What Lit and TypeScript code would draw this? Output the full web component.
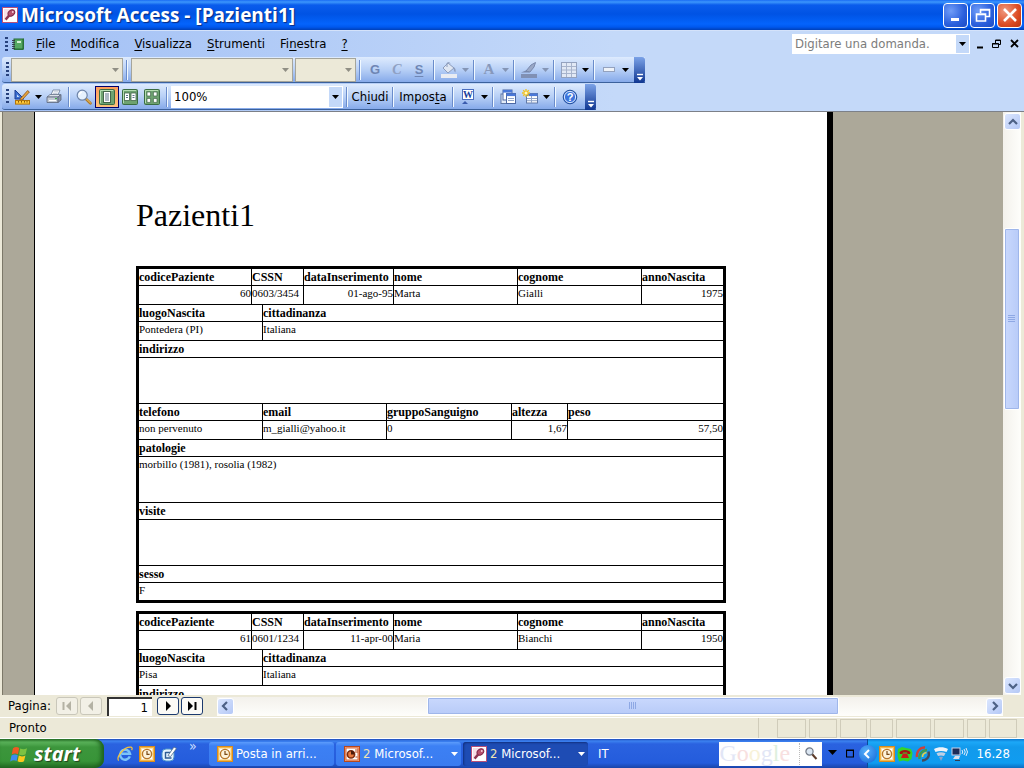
import { LitElement, html, css, svg, nothing, type TemplateResult } from "lit";
import { customElement, property } from "lit/decorators.js";

const icon = (body: unknown, w = 16, h = 16) => html`<svg
  width=${w} height=${h} viewBox="0 0 ${w} ${h}" aria-hidden="true">${body}</svg>`;

const arrow = (fill = "#000") => icon(svg`<path d="M0 0h7L3.5 4z" fill=${fill}/>`, 7, 4);

const clockIcon = icon(svg`
  <rect x=".5" y=".5" width="15" height="15" fill="#f6b84a" stroke="#d98c1c"/>
  <rect x="2.5" y="2.5" width="11" height="11" fill="#fff" stroke="#fbe3ae"/>
  <circle cx="8" cy="8" r="4.6" fill="#fdf3dc" stroke="#b8772a" stroke-width="1.4"/>
  <path d="M8 5v3.4h2.6" fill="none" stroke="#7a4a16" stroke-width="1.2"/>`);

const keyIcon = icon(svg`
  <rect x=".5" y=".5" width="15" height="15" fill="#fff" stroke="#b85078"/>
  <path d="M2 14V2h12z" fill="#f7dfe6"/>
  <ellipse cx="9.4" cy="6" rx="3.6" ry="2.8" transform="rotate(-40 9.4 6)" fill="#b8506c" stroke="#7e2447"/>
  <path d="M7.2 8.4L3.6 12.6" stroke="#8e3450" stroke-width="2.4"/>
  <circle cx="10.8" cy="5" r=".9" fill="#f4d4dc"/>`);

const pptIcon = icon(svg`
  <rect x=".5" y=".5" width="15" height="15" fill="#f0a888" stroke="#b8481c"/>
  <rect x="2" y="2" width="12" height="12" fill="#fff" stroke="#d9683a"/>
  <circle cx="7" cy="8.4" r="3.6" fill="#e87a40" stroke="#7c2c10" stroke-width="1.6"/>
  <path d="M7 8.4V4.8a3.6 3.6 0 0 1 3.4 3.6z" fill="#4a1c0c"/>
  <path d="M11 4h3M11 6h3M11.500 11h2" stroke="#b8481c"/>`);

const bookIcon = icon(svg`
  <path d="M4 3h9l1-1v11l-1 1H4z" fill="#2c7a3c"/>
  <rect x="4" y="3" width="9" height="10" fill="#56a862" stroke="#246a34"/>
  <rect x="7" y="5" width="4" height="2" fill="#d4efd4"/>
  <path d="M2 4.5h3M2 6.5h3M2 8.5h3M2 10.5h3M2 12.5h3" stroke="#334" stroke-width=".9"/>`);

const designIcon = icon(svg`
  <path d="M1 1v9h9z" fill="#3a6fd0" stroke="#1c3f94"/>
  <path d="M3 5.6V8h2.4z" fill="#cfe0fb"/>
  <path d="M6.4 9.6L13.6 1.6l1.8 1.4L8.4 10.6l-2.6.8z" fill="#e9a53c" stroke="#85501a" stroke-width=".8"/>
  <rect x="1.5" y="11.5" width="14" height="3.6" fill="#ffc93a" stroke="#b17408"/>
  <path d="M4.5 12v1.6M7.5 12v1.6M10.5 12v1.6M13 12v1.6" stroke="#8a5a08"/>`, 17, 16);

const printIcon = icon(svg`
  <path d="M5 6L7 1h7l-2 5z" fill="#fff" stroke="#7384a0" stroke-width=".9"/>
  <path d="M7.6 2.8h4.6M7 4.4h4.6" stroke="#a8b4c8" stroke-width=".7"/>
  <path d="M1 8l3-2.5h10.5L12 8z" fill="#dde2e8" stroke="#68748a" stroke-width=".8"/>
  <path d="M1 8h11v5.5H1z" fill="#c3cad4" stroke="#5a667c" stroke-width=".8"/>
  <path d="M12 8l3-2.5V11l-3 2.5z" fill="#8b95a6" stroke="#5a667c" stroke-width=".8"/>
  <path d="M3 11.5h7" stroke="#fff"/><rect x="9" y="9" width="2" height="1.2" fill="#3cae4c"/>`);

const zoomIcon = icon(svg`
  <path d="M10 10l4.4 4.2" stroke="#b07a28" stroke-width="2.8" stroke-linecap="round"/>
  <path d="M10.4 10l4 3.8" stroke="#f4cd70" stroke-width="1" stroke-linecap="round"/>
  <circle cx="6.2" cy="6.2" r="5" fill="#e6f1fd" stroke="#6f85a8" stroke-width="1.2"/>
  <path d="M3.4 6a3 3 0 0 1 2.6-2.8" fill="none" stroke="#fff" stroke-width="1.3"/>`);

const pagesIcon = (n: 1 | 2 | 4) => icon(svg`
  <rect x=".5" y=".5" width="15" height="15" rx="1" fill="#6ea270" stroke="#3a6c42"/>
  <path d="M1.5 14V1.5H14" fill="none" stroke="#b4dcb0"/>
  ${n === 1 ? svg`<rect x="4.5" y="2.5" width="7" height="11" fill="#fff" stroke="#44664a"/>
    <path d="M6 5h4M6 7h4M6 9h4M6 11h4" stroke="#5c7288"/>` : nothing}
  ${n === 2 ? svg`<rect x="2.5" y="4" width="5" height="7.5" fill="#fff" stroke="#44664a" stroke-width=".8"/>
    <rect x="9" y="4" width="5" height="7.5" fill="#fff" stroke="#44664a" stroke-width=".8"/>
    <path d="M4 6.5h2M10.5 6.5h2M4 8.5h2M10.5 8.5h2" stroke="#5c7288"/>` : nothing}
  ${n === 4 ? svg`<path d="M3 3h3.6v4H3zM9.4 3H13v4H9.4zM3 9.4h3.6v4H3zM9.4 9.4H13v4H9.4z" fill="#fff" stroke="#3e6446" stroke-width=".7"/>` : nothing}`);

const wordIcon = icon(svg`
  <rect x="2.5" y=".5" width="11" height="10" fill="#fff" stroke="#4a6ec0"/>
  <text x="8" y="9" text-anchor="middle" font-family="Liberation Serif, serif" font-weight="bold" font-size="10" fill="#1c3f9c">W</text>
  <path d="M2 15l3-3 3 3z" fill="#3a5cae"/>`);

const windowsIcon = icon(svg`
  <rect x="1" y="5" width="8" height="9.5" fill="#e4ecf8" stroke="#6079a8"/>
  <rect x="3" y="1" width="9" height="10" fill="#fff" stroke="#4c68a4"/><rect x="3" y="1" width="9" height="2.6" fill="#4a78d8"/>
  <rect x="6.5" y="4.5" width="9" height="10" fill="#fff" stroke="#4c68a4"/><rect x="6.5" y="4.5" width="9" height="2.6" fill="#4a78d8"/>
  <path d="M8 9.5h6M8 11.5h6" stroke="#90a4c8"/>`);

const newObjIcon = icon(svg`
  <rect x="4.5" y="4.5" width="11" height="9.5" fill="#fff" stroke="#6079a8"/>
  <rect x="4.5" y="4.5" width="11" height="2.6" fill="#4a78d8"/>
  <path d="M5 9.5h10M5 11.7h10M9.5 7v7" stroke="#90a4c8"/>
  <path d="M4 0v8M0 4h8M1.2 1.2l5.6 5.6M6.8 1.2L1.2 6.8" stroke="#f3c21c" stroke-width="1.3"/>
  <circle cx="4" cy="4" r="1.5" fill="#fff8c0"/>`);

const helpIcon = icon(svg`
  <circle cx="8" cy="8" r="6.8" fill="#3c74dc" stroke="#24509c"/>
  <circle cx="8" cy="8" r="5.6" fill="none" stroke="#d8e6fc"/>
  <text x="8" y="12" text-anchor="middle" font-family="Liberation Sans, sans-serif" font-weight="bold" font-size="11" fill="#fff">?</text>`);

const fillIcon = icon(svg`
  <path d="M7 1l6 5-6 5-5-5z" fill="#dfe6f2" stroke="#8c9cbc"/>
  <path d="M6 5V1.5a1.6 1.6 0 0 1 3 0" fill="none" stroke="#8c9cbc"/>
  <path d="M12.6 5c2 1 2.4 3 1.8 5.4-1.4-1-2-3-1.8-5.4z" fill="#8c9cbc"/>
  <rect x="0" y="12" width="16" height="4" fill="#e9ecf2"/>`);
const penIcon = icon(svg`
  <path d="M5 9l5-6 4.500-2.500L13 5l-4 5z" fill="#9aa8c6" stroke="#7888ac"/><path d="M0 10.500l5-2L9 10.500z" fill="#7888ac"/>
  <rect x="0" y="12" width="16" height="4" fill="#8090b4"/>`);
const gridIcon = icon(svg`
  <rect x=".5" y=".5" width="15" height="15" fill="#e2e9f5" stroke="#94a2be"/>
  <path d="M1 4.5h14M1 8h14M1 11.5h14M5.5 1v14M10.5 1v14" stroke="#a8b4cc"/>`);
const lineIcon = icon(svg`<rect x="2.5" y="5.5" width="11" height="4" fill="#eef2f8" stroke="#94a2be"/>`);

const ieIcon = icon(svg`
  <path d="M12.8 10.4A5 5 0 1 1 13 7.8H4.6" fill="none" stroke="#7cc4f8" stroke-width="2.5"/>
  <path d="M1.6 14.6C-1 11 7 .4 14 1.2c1.4.2 1.4 1.8.6 3" fill="none" stroke="#f5c23c" stroke-width="1.2"/>`);
const desktopIcon = icon(svg`
  <rect x="1" y="3" width="12" height="12" rx="4" fill="#e4f2fd" stroke="#4c94cc"/>
  <path d="M4.500 6.500h6M4.500 6v6h6" fill="none" stroke="#2c5c94" stroke-width="1.400"/>
  <path d="M7 9.500l6-8.500 2.500 1.600-6 8z" fill="#fff" stroke="#48688c" stroke-width=".8"/>`);
const flagIcon = icon(svg`
  <path d="M3 3.2C5.4 1.6 7.4 2 9.2 3L8 9.2C6.200 8.200 4 8 1.700 9.400z" fill="#ee5a24"/>
  <path d="M10.200 3.400c2 1 4.200 1.200 6.800-.2l-1.400 6c-2.400 1.400-4.600 1.200-6.600.2z" fill="#7cc242"/>
  <path d="M1.500 10.400c2.300-1.400 4.400-1.200 6.300-.2L6.600 16C4.800 15 2.600 15 .2 16.400z" fill="#3c8cf0"/>
  <path d="M8.800 10.600c2 1 4.200 1.200 6.600-.2L14 16.200c-2.400 1.400-4.400 1-6.400 0z" fill="#fbc81c"/>`, 18, 18);
const phoneIcon = icon(svg`
  <path d="M1 3l4-2 4 1 5 1 1.500 4-1 6-3.500 2.500-5-1-4 1-1.500-6z" fill="#34d428"/>
  <path d="M2.500 6.500c1-3.500 10-3.500 11 0l-.5 1.500h-2.500L10 6.500H6L5.500 8H3z" fill="#a81414"/>
  <path d="M6 7.500h4l2 4.500H4z" fill="#c81c1c"/>`);
const swirlIcon = icon(svg`
  <path d="M2 11C1 6 5 1 10 1.500" fill="none" stroke="#d04038" stroke-width="2.400"/>
  <path d="M4.500 13c-1-4 2-8.500 7.500-9" fill="none" stroke="#3c9c50" stroke-width="2.400"/>
  <path d="M7 14.500c5 0 8-4 6.500-9" fill="none" stroke="#444c5c" stroke-width="2.400"/>
  <path d="M7.500 11c0-2 1.500-4 4-4.500" fill="none" stroke="#e8d048" stroke-width="1.600"/>`);
const wifiIcon = icon(svg`
  <path d="M1 3c4-2.500 10-2.500 14 0l-1.500 3c-3.500-1.500-7.500-1.500-11 0z" fill="#eef3fa"/>
  <path d="M3.500 7.200c3-1.200 6-1.200 9 0L11 10c-2-.8-4-.8-6 0z" fill="#c0cfe4"/>
  <path d="M6 11c1.400-.5 2.600-.5 4 0l-2 4z" fill="#8ca4cc"/>`);
const netIcon = icon(svg`
  <rect x="1" y="2" width="8" height="7" fill="#1c2c58" stroke="#c8d4ec"/>
  <path d="M2 13l2-3h5l-1 3z" fill="#d8dfec"/><path d="M4 14.500h5" stroke="#333c50"/>
  <path d="M11 4q1.500 2 0 4M13 3q2.500 3 0 6M15 2q3 4 0 8" fill="none" stroke="#e4edfa"/>`, 18, 16);

@customElement("tool-button")
class ToolButton extends LitElement {
  @property() label = "";
  @property({ type: Boolean }) menu = false;
  @property({ type: Boolean }) active = false;
  @property({ type: Boolean }) dim = false;
  @property({ attribute: false }) glyph: TemplateResult | null = null;
  static styles = css`
    :host { display: flex; align-items: center; height: 22px; }
    button { border: 0; padding: 0; background: none; height: 22px; width: 22px; display: grid; place-items: center; }
    .active { width: 24px; border: 1px solid #00006c; background: linear-gradient(#fd9d5a, #fdc27c); }
    .drop { width: 10px; }
  `;
  render() {
    return html`<button class=${this.active ? "active" : ""} aria-label=${this.label}>${this.glyph}</button>
      ${this.menu ? html`<button class="drop" aria-label="${this.label}: opzioni">${arrow(this.dim ? "#8495b5" : "#000")}</button>` : nothing}`;
  }
}

interface Patient {
  code: string; cssn: string; date: string; name: string; surname: string; year: string;
  place: string; citizen: string;
  clinical?: { phone: string; email: string; group: string; height: string; weight: string; illness: string; sex: string };
}

const patients: Patient[] = [
  { code: "60", cssn: "0603/3454", date: "01-ago-95", name: "Marta", surname: "Gialli", year: "1975",
    place: "Pontedera (PI)", citizen: "Italiana",
    clinical: { phone: "non pervenuto", email: "m_gialli@yahoo.it", group: "0", height: "1,67", weight: "57,50",
      illness: "morbillo (1981), rosolia (1982)", sex: "F" } },
  { code: "61", cssn: "0601/1234", date: "11-apr-00", name: "Maria", surname: "Bianchi", year: "1950",
    place: "Pisa", citizen: "Italiana" },
];

type Field = [label: string, value: string, width?: number, right?: boolean];

@customElement("patient-record")
class PatientRecord extends LitElement {
  @property({ attribute: false }) patient!: Patient;
  static styles = css`
    :host { display: block; border: 3px solid #000; }
    table { width: 100%; table-layout: fixed; border-collapse: separate; border-spacing: 0; }
    th, td { padding: 0; text-align: left; vertical-align: top; white-space: nowrap; border-bottom: 1px solid #000; border-left: 1px solid #000; }
    th:first-child, td:first-child { border-left: 0; }
    th { height: 16px; font: bold 12px/16px "Liberation Serif", serif; }
    td { height: 18px; font: 11px/14px "Liberation Serif", serif; }
    .tall td { height: 45px; }
    .last td { height: 17px; border-bottom: 0; }
    td.right { text-align: right; }
  `;
  private block(fields: Field[], kind = "") {
    return html`<table class=${kind}>
      <colgroup>${fields.map(([, , w]) => html`<col width=${w ?? nothing}>`)}</colgroup>
      <thead><tr>${fields.map(([l]) => html`<th scope="col">${l}</th>`)}</tr></thead>
      <tbody><tr>${fields.map(([, v, , r]) => html`<td class=${r ? "right" : ""}>${v}</td>`)}</tr></tbody>
    </table>`;
  }
  render() {
    const p = this.patient;
    const c = p.clinical;
    return html`
      ${this.block([["codicePaziente", p.code, 112, true], ["CSSN", p.cssn, 52], ["dataInserimento", p.date, 90, true],
        ["nome", p.name, 124], ["cognome", p.surname, 124], ["annoNascita", p.year, undefined, true]])}
      ${this.block([["luogoNascita", p.place, 123], ["cittadinanza", p.citizen]])}
      ${this.block([["indirizzo", ""]], "tall")}
      ${c ? html`
        ${this.block([["telefono", c.phone, 123], ["email", c.email, 124], ["gruppoSanguigno", c.group, 125],
          ["altezza", c.height, 56, true], ["peso", c.weight, undefined, true]])}
        ${this.block([["patologie", c.illness]], "tall")}
        ${this.block([["visite", ""]], "tall")}
        ${this.block([["sesso", c.sex]], "last")}` : nothing}`;
  }
}

const chevron = (d: string) => icon(svg`<path d=${d} fill="none" stroke="#4d6185" stroke-width="2.200"/>`, 10, 10);

@customElement("app-root")
class AppRoot extends LitElement {
  static styles = css`
    :host { display: flex; flex-direction: column; height: 100vh; overflow: hidden; background: #ece9d8;
      font: 13px/16px "DejaVu Sans Condensed", "DejaVu Sans", sans-serif; color: #000; }
    * { box-sizing: border-box; }
    button, input, select { font: inherit; color: inherit; margin: 0; }
    button { padding: 0; }
    a { color: inherit; text-decoration: none; }
    svg { display: block; flex: none; }
    u { text-underline-offset: 2px; }

    .title { flex: none; height: 30px; display: flex; align-items: center; gap: 3px; padding: 0 2px;
      background: linear-gradient(#1a6cf4 0, #3c96fc 2px, #0a5cec 5px, #0053e4 14px, #0464fc 24px, #0058ee 27px, #0040b8 30px); }
    .title h1 { flex: 1; margin: 0; font: bold 19px/28px "Open Sans", "Noto Sans", sans-serif; color: #fff; text-shadow: 1px 1px 1px #0a2c80; }
    .caption { display: flex; gap: 2px; }
    .caption button { width: 25px; height: 25px; border: 1px solid #fff; border-radius: 4px; display: grid; place-items: center;
      background: radial-gradient(circle at 30% 30%, #6f9cf8, #2a5fdc 60%, #1c4cc4); }
    .caption .close { background: radial-gradient(circle at 30% 30%, #f09a80, #dc4c24 60%, #b83410); }

    .bars { flex: none; background: linear-gradient(90deg, #a2c0f5, #c4d9f9 60%); height: 82px; border-bottom: 1px solid #7c8088; }
    .menu { height: 27px; display: flex; align-items: center; gap: 15px; padding: 0 4px 0 5px; border-top: 1px solid #d4e2fa; }
    .lead { display: flex; align-items: center; gap: 2px; margin-right: -5px; }
    .grip { width: 3px; height: 15px; flex: none; background: repeating-linear-gradient(#27417c 0 2px, transparent 2px 4px); }
    .menu .ask { margin-left: auto; display: flex; align-items: center; width: 178px; height: 20px; background: #fff; border: 1px solid #fff; }
    .ask input { flex: 1; min-width: 0; border: 0; padding: 0 2px; background: none; outline: 0; }
    .ask input::placeholder { color: #7c7c7c; opacity: 1; }
    .ask button { width: 13px; height: 18px; border: 0; background: #c4d9f9; display: grid; place-items: center; }
    .mdi { display: flex; gap: 8px; margin-left: -9px; }
    .mdi button { border: 0; background: none; }

    .tools { display: flex; align-items: center; width: max-content; height: 26px; margin-left: 2px; padding-left: 4px;
      background: linear-gradient(#deebfe, #b8d0f6 50%, #86aaea); border-bottom: 1px solid #3b619c; border-radius: 3px 0 0 3px; }
    .tools + .tools { margin-top: 1px; }
    .tools .grip { margin-right: 2px; }
    .sep { flex: none; width: 8px; height: 20px; background: linear-gradient(90deg, transparent 3px, #6a8ccb 3px 4px, #f1f9ff 4px 5px, transparent 5px); }
    .combo { display: flex; height: 22px; background: #fff; border: 1px solid #fff; position: relative; align-items: center; }
    .combo select { appearance: none; border: 0; background: none; width: 100%; height: 100%; padding: 0 2px; outline: 0; opacity: 1; }
    .combo .arr { position: absolute; right: 0; top: 0; bottom: 0; width: 13px; display: grid; place-items: center; background: #c4d9f9; pointer-events: none; }
    .combo.off { background: #ece9d8; border-color: #a5a59b; height: 24px; }
    .combo.off .arr { background: none; }
    .w112 { width: 112px; } .w162 { width: 162px; } .w61 { width: 61px; margin-left: 2px; } .w172 { width: 172px; }
    .letter { width: 22px; height: 22px; border: 0; background: none; color: #6f86b4; font: bold 13px/16px "Liberation Sans", sans-serif; text-align: center; }
    .c { font: italic bold 14px/16px "Liberation Serif", serif; color: #8fa0c2; }
    .txt { border: 0; background: none; width: 38px; white-space: nowrap; }
    .txt.wide { width: 52px; }
    .cap { width: 11px; align-self: stretch; margin: 0 0 -1px 4px; border: 0; border-radius: 0 3px 3px 0;
      background: linear-gradient(#7ba2e7, #0f3691); display: grid; place-items: end center; padding-bottom: 2px; }

    .work { flex: 1; min-height: 0; display: flex; padding: 0 3px 0 2px; }
    .view { flex: 1; min-width: 0; overflow: hidden; background: #aca899; border-left: 1px solid #7c7868; padding-left: 31px; }
    .sheet { width: 799px; min-height: 100%; background: #fff; border-left: 1px solid #000; border-right: 6px solid #000; padding: 85px 101px 0; display: flex; flex-direction: column; gap: 8px; }
    .sheet h2 { margin: 0 0 25px; font: 32px/36px "Liberation Serif", serif; }
    .vbar { width: 18px; display: flex; flex-direction: column; background: linear-gradient(90deg, #f3f1ec, #fefefb); padding: 1px; }
    .sb { flex: none; width: 17px; height: 17px; display: grid; place-items: center; border: 1px solid #fff; border-radius: 3px;
      background: linear-gradient(135deg, #dbe6fe, #b4c8f6); }
    .vthumb, .hthumb { border: 1px solid #fff; border-radius: 2px; outline: 1px solid #9fb6ea; outline-offset: -2px; display: grid; place-items: center; }
    .up { flex: 98; } .down { flex: 268; }
    .vthumb { flex: 181; background: linear-gradient(90deg, #c9d8fd, #b8cbf8); }

    .nav { flex: none; height: 22px; display: flex; align-items: center; gap: 2px; padding: 0 3px 0 8px; }
    .nav label { margin-right: 3px; }
    .nb { width: 22px; height: 18px; border: 1px solid #1c3a6e; border-radius: 3px; background: #fbfaf6; display: grid; place-items: center; }
    .nb:disabled { border-color: #c9c7ba; background: #f2f0e6; }
    .nav input { width: 45px; height: 19px; margin: 0 3px; border: 0; border-top: 2px solid #333; border-left: 2px solid #333; background: #fff; padding: 0 4px; text-align: right; }
    .hbar { flex: 1; margin-left: 12px; margin-right: 18px; height: 19px; display: flex; align-items: center; background: linear-gradient(#f3f1ec, #fefefb); }
    .hl { flex: 194; } .hthumb { flex: 411; height: 18px; background: linear-gradient(#c9d8fd, #b8cbf8); } .hr { flex: 148; }

    .status { flex: none; height: 22px; display: flex; align-items: center; gap: 3px; padding: 0 7px 0 9px; border-top: 1px solid #fff; border-bottom: 1px solid #fff; }
    .status span { flex: 1; height: 20px; line-height: 20px; border-right: 1px solid #d0ccba; margin-right: 15px; }
    .cell { height: 19px; border: 1px solid #d0ccba; }

    .task { flex: none; height: 29px; display: flex; align-items: center; color: #fff;
      background: linear-gradient(#1c48b8 0, #3c82f0 2px, #2a62e0 5px, #245cdc 24px, #1a44a8); }
    .start { width: 104px; height: 29px; border: 0; border-radius: 0 9px 9px 0; display: flex; align-items: center; gap: 6px; padding-left: 10px;
      background: linear-gradient(#2f7a2f 0, #5cb45c 3px, #3c963c 8px, #389438 22px, #246c24); box-shadow: inset -3px 0 4px #1c601c;
      font: italic bold 20px/24px "Noto Sans", "Open Sans", sans-serif; color: #fff; text-shadow: 1px 1px 1px #1c401c; }
    .quick { display: flex; align-items: center; align-self: stretch; gap: 6px; padding-left: 13px; width: 105px; }
    .quick button { border: 0; background: none; }
    .quick .more { align-self: flex-start; font-size: 14px; line-height: 14px; margin-left: 6px; color: #cfe0ff; }
    .app { width: 125px; height: 24px; margin-right: 2px; display: flex; align-items: center; gap: 3px; padding: 0 3px 0 8px; border: 0; border-radius: 3px;
      background: linear-gradient(#5c9cfc, #3c80f4 4px, #3a7cf0); color: #fff; text-align: left; white-space: nowrap; }
    .app b { color: #f0e4b4; font-weight: normal; }
    .app span { flex: 1; }
    .app.on { background: #1e4cb4; box-shadow: inset 1px 1px 2px #123080; }
    .lang { margin-left: 8px; }
    .google { margin-left: auto; width: 103px; height: 24px; background: #fff; display: flex; align-items: center; justify-content: space-between; padding-right: 4px; position: relative; }
    .google input { width: 81px; height: 22px; border: 0; border-right: 1px dotted #bbb; background: none; padding: 0 2px; outline: 0; color: #000; }
    .google label { position: absolute; left: 1px; top: 0; font: 24px/22px "Liberation Serif", serif; pointer-events: none; }
    .google button { border: 0; background: none; }
    .gb { color: #e2e6f6; } .gr { color: #f8e0e0; } .gy { color: #f8f2d8; } .gg { color: #def0de; }
    .mini { display: flex; align-items: center; gap: 9px; width: 45px; padding-left: 6px; }
    .tray { height: 29px; display: flex; align-items: center; gap: 2px; padding-right: 14px; border-left: 1px solid #0c4c98;
      background: linear-gradient(#0c78d0 0, #1ca8f8 3px, #129aec 8px, #109cf0 24px, #0c6cc0); }
    .tray .fold { width: 18px; height: 18px; margin-left: -9px; border: 0; border-radius: 9px; background: radial-gradient(circle at 40% 35%, #54b0fc, #1464d4); display: grid; place-items: center; }
    .tray time { margin-left: 6px; }
  `;

  private scroll(label: string, d: string) {
    return html`<button class="sb" aria-label=${label}>${chevron(d)}</button>`;
  }

  render() {
    return html`
      <header class="title">
        ${keyIcon}
        <h1>Microsoft Access - [Pazienti1]</h1>
        <div class="caption">
          <button aria-label="Riduci a icona">${icon(svg`<path d="M3 12.500h8" stroke="#fff" stroke-width="3"/>`)}</button>
          <button aria-label="Ripristina">${icon(svg`<path d="M5.500 6V2.500h9v7H11M5 3h10" fill="none" stroke="#fff" stroke-width="1.600"/><path d="M1.500 7h9v7h-9zM1 7.500h10" fill="none" stroke="#fff" stroke-width="1.600"/>`)}</button>
          <button class="close" aria-label="Chiudi">${icon(svg`<path d="M2 2l12 12M14 2L2 14" stroke="#fff" stroke-width="2.600"/>`)}</button>
        </div>
      </header>

      <div class="bars">
        <nav class="menu">
          <div class="lead"><i class="grip"></i>${bookIcon}</div>
          <a href="#"><u>F</u>ile</a><a href="#"><u>M</u>odifica</a><a href="#"><u>V</u>isualizza</a>
          <a href="#"><u>S</u>trumenti</a><a href="#">Fi<u>n</u>estra</a><a href="#"><u>?</u></a>
          <div class="ask">
            <input aria-label="Domanda" placeholder="Digitare una domanda.">
            <button aria-label="Domande recenti">${arrow()}</button>
          </div>
          <div class="mdi">
            <button aria-label="Riduci finestra">${icon(svg`<path d="M1 8.500h6" stroke="#000" stroke-width="2"/>`, 8, 10)}</button>
            <button aria-label="Ripristina finestra">${icon(svg`<path d="M3.500 4V1h5v4.500H7M3 1.500h6M.5 4.500h6v4h-6zM0 5h7" fill="none" stroke="#000"/>`, 10, 10)}</button>
            <button aria-label="Chiudi finestra">${icon(svg`<path d="M1 1l7 7M8 1L1 8" stroke="#000" stroke-width="1.800"/>`, 10, 10)}</button>
          </div>
        </nav>

        <div class="tools" role="toolbar" aria-label="Formattazione">
          <i class="grip"></i>
          <div class="combo off w112"><select disabled aria-label="Oggetto"></select><span class="arr">${arrow("#908f84")}</span></div>
          <i class="sep"></i>
          <div class="combo off w162"><select disabled aria-label="Tipo di carattere"></select><span class="arr">${arrow("#908f84")}</span></div>
          <div class="combo off w61"><select disabled aria-label="Dimensione"></select><span class="arr">${arrow("#908f84")}</span></div>
          <i class="sep"></i>
          <button class="letter">G</button><button class="letter c">C</button><button class="letter"><u>S</u></button>
          <i class="sep"></i>
          <tool-button menu dim label="Colore riempimento" .glyph=${fillIcon}></tool-button><i class="sep"></i>
          <tool-button menu dim label="Colore carattere" .glyph=${icon(svg`<text x="8" y="12" text-anchor="middle" font-family="Liberation Serif, serif" font-weight="bold" font-size="15" fill="#8798bb">A</text>`)}></tool-button><i class="sep"></i>
          <tool-button menu dim label="Colore linea" .glyph=${penIcon}></tool-button><i class="sep"></i>
          <tool-button menu label="Griglia" .glyph=${gridIcon}></tool-button><i class="sep"></i>
          <tool-button menu label="Spessore linea" .glyph=${lineIcon}></tool-button>
          <button class="cap" aria-label="Altre opzioni">${icon(svg`<path d="M1 1.500h6" stroke="#fff" stroke-width="1.400"/><path d="M1 4h6L4 7.500z" fill="#fff"/>`, 8, 8)}</button>
        </div>

        <div class="tools" role="toolbar" aria-label="Anteprima di stampa">
          <i class="grip"></i>
          <tool-button menu label="Visualizza" .glyph=${designIcon}></tool-button>
          <tool-button label="Stampa" .glyph=${printIcon}></tool-button>
          <i class="sep"></i>
          <tool-button label="Zoom" .glyph=${zoomIcon}></tool-button>
          <tool-button active label="Una pagina" .glyph=${pagesIcon(1)}></tool-button>
          <tool-button label="Due pagine" .glyph=${pagesIcon(2)}></tool-button>
          <tool-button label="Più pagine" .glyph=${pagesIcon(4)}></tool-button>
          <i class="sep"></i>
          <div class="combo w172"><select aria-label="Percentuale zoom"><option>100%</option></select><span class="arr">${arrow()}</span></div>
          <i class="sep"></i><button class="txt">Ch<u>i</u>udi</button>
          <i class="sep"></i><button class="txt wide">Impos<u>t</u>a</button>
          <i class="sep"></i><tool-button menu label="Collegamenti Office" .glyph=${wordIcon}></tool-button>
          <i class="sep"></i><tool-button label="Finestra database" .glyph=${windowsIcon}></tool-button>
          <tool-button menu label="Nuovo oggetto" .glyph=${newObjIcon}></tool-button>
          <i class="sep"></i><tool-button label="Guida" .glyph=${helpIcon}></tool-button>
          <button class="cap" aria-label="Altre opzioni">${icon(svg`<path d="M1 1.500h6" stroke="#fff" stroke-width="1.400"/><path d="M1 4h6L4 7.500z" fill="#fff"/>`, 8, 8)}</button>
        </div>
      </div>

      <main class="work">
        <div class="view">
          <div class="sheet">
            <h2>Pazienti1</h2>
            ${patients.map((p) => html`<patient-record .patient=${p}></patient-record>`)}
          </div>
        </div>
        <div class="vbar">
          ${this.scroll("Su", "M1 7l4-4 4 4")}
          <i class="up"></i>
          <div class="vthumb">${icon(svg`<path d="M0 .5h7M0 2.500h7M0 4.500h7M0 6.500h7" stroke="#8ea8e4"/>`, 8, 8)}</div>
          <i class="down"></i>
          ${this.scroll("Giù", "M1 3l4 4 4-4")}
        </div>
      </main>

      <div class="nav">
        <label for="page">Pagina:</label>
        <button class="nb" disabled aria-label="Prima pagina">${icon(svg`<path d="M1.500 1v8" stroke="#b4b2a4" stroke-width="2"/><path d="M9 0v10L4 5z" fill="#b4b2a4"/>`, 10, 10)}</button>
        <button class="nb" disabled aria-label="Pagina precedente">${icon(svg`<path d="M7 0v10L2 5z" fill="#b4b2a4"/>`, 10, 10)}</button>
        <input id="page" value="1">
        <button class="nb" aria-label="Pagina successiva">${icon(svg`<path d="M3 0v10l5-5z"/>`, 10, 10)}</button>
        <button class="nb" aria-label="Ultima pagina">${icon(svg`<path d="M1 0v10l5-5z"/><path d="M8.500 1v8" stroke="#000" stroke-width="2"/>`, 10, 10)}</button>
        <div class="hbar">
          ${this.scroll("Sinistra", "M7 1L3 5l4 4")}
          <i class="hl"></i>
          <div class="hthumb">${icon(svg`<path d="M.5 0v7M2.500 0v7M4.500 0v7M6.500 0v7" stroke="#8ea8e4"/>`, 8, 8)}</div>
          <i class="hr"></i>
          ${this.scroll("Destra", "M3 1l4 4-4 4")}
        </div>
      </div>

      <footer class="status">
        <span>Pronto</span>
        ${[29, 28, 27, 23, 35, 30, 19, 28].map((w) => html`<i class="cell" style="width:${w}px"></i>`)}
      </footer>

      <div class="task">
        <button class="start">${flagIcon}start</button>
        <div class="quick">
          <button aria-label="Internet Explorer">${ieIcon}</button>
          <button aria-label="Outlook">${clockIcon}</button>
          <button aria-label="Mostra desktop">${desktopIcon}</button>
          <button class="more" aria-label="Altri collegamenti">»</button>
        </div>
        <button class="app">${clockIcon}<span>Posta in arri...</span></button>
        <button class="app">${pptIcon}<span><b>2</b> Microsof...</span>${arrow("#fff")}</button>
        <button class="app on">${keyIcon}<span><b>2</b> Microsof...</span>${arrow("#fff")}</button>
        <span class="lang">IT</span>
        <div class="google">
          <input id="search">
          <label for="search"><span class="gb">G</span><span class="gr">o</span><span class="gy">o</span><span class="gb">g</span><span class="gg">l</span><span class="gr">e</span></label>
          <button aria-label="Avvia ricerca">${icon(svg`<path d="M7 7l4.500 5" stroke="#5c3a28" stroke-width="2"/><circle cx="4.500" cy="4.500" r="3.600" fill="#dbe6f2" stroke="#707884" stroke-width="1.200"/>`, 13, 13)}</button>
        </div>
        <div class="mini">${icon(svg`<path d="M0 0h9L4.500 5z"/>`, 9, 8)}${icon(svg`<path d="M.5 1h7v7h-7zM0 1.500h8" fill="none" stroke="#000" stroke-width="1.200"/>`, 8, 9)}</div>
        <div class="tray">
          <button class="fold" aria-label="Mostra icone nascoste">${icon(svg`<path d="M6 1L2 5l4 4" fill="none" stroke="#fff" stroke-width="2"/>`, 9, 10)}</button>
          ${clockIcon}${phoneIcon}${swirlIcon}${wifiIcon}${netIcon}
          <time>16.28</time>
        </div>
      </div>`;
  }
}
